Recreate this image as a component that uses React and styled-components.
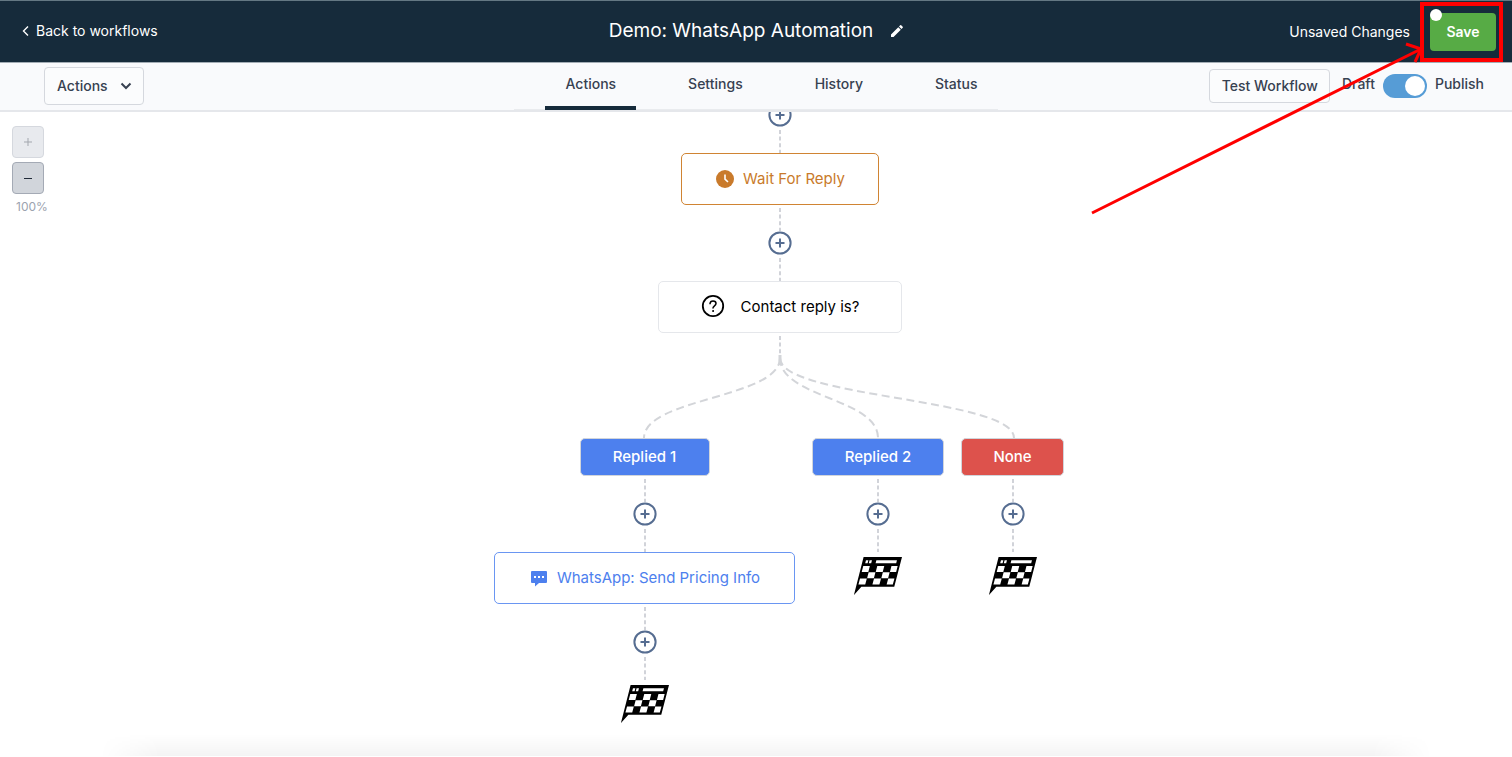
import React from "react";
import styled, { createGlobalStyle } from "styled-components";

const GlobalStyle = createGlobalStyle`
  *, *::before, *::after { box-sizing: border-box; }
  body {
    margin: 0;
    background: #fff;
    color: #374151;
    font-family: Inter, "Liberation Sans", sans-serif;
    font-size: 14px;
    line-height: 20px;
  }
  button, input { font: inherit; color: inherit; }
  button { cursor: pointer; padding: 0; }
  svg { display: block; flex: none; }
`;

const Page = styled.div`
  position: relative;
  display: flex;
  flex-direction: column;
  min-height: 100vh;
  overflow: hidden;
`;

const Header = styled.header`
  display: grid;
  grid-template-columns: 1fr auto 1fr;
  align-items: center;
  height: 63px;
  padding-bottom: 2px;
  background: #162b3b;
  border-top: 1px solid #647883;
  border-bottom: 1px solid #a3adb5;
  color: #fff;
`;

const BackLink = styled.a`
  display: flex;
  align-items: center;
  gap: 6px;
  justify-self: start;
  padding-left: 22px;
  color: #fff;
  text-decoration: none;
`;

const TitleGroup = styled.div`
  display: flex;
  align-items: center;
  gap: 18px;
`;

const Title = styled.h1`
  margin: 0;
  font-size: 19px;
  line-height: 28px;
  font-weight: 400;
`;

const IconButton = styled.button`
  border: 0;
  background: none;
`;

const HeaderRight = styled.div`
  display: flex;
  align-items: center;
  justify-content: flex-end;
  gap: 20px;
  padding: 2px 16px 0 0;
`;

const SaveSpot = styled.div`
  position: relative;
`;

const SaveButton = styled.button`
  display: block;
  width: 66px;
  height: 38px;
  border: 0;
  border-radius: 4px;
  background: #57ab45;
  color: #fff;
  font-weight: 600;
`;

const UnsavedDot = styled.span`
  position: absolute;
  top: -4px;
  left: 0;
  width: 12px;
  height: 12px;
  border-radius: 50%;
  background: #fff;
`;

const Highlight = styled.svg`
  position: absolute;
  z-index: 5;
  top: -13px;
  right: -16px;
  pointer-events: none;
`;

const Toolbar = styled.div`
  display: grid;
  grid-template-columns: 1fr auto 1fr;
  height: 49px;
  background: #f9fafc;
  border-bottom: 2px solid #e5e7eb;
`;

const ToolbarLeft = styled.div`
  display: flex;
  align-items: center;
  padding: 0 0 2px 44px;
`;

const ToolbarRight = styled.div`
  display: flex;
  align-items: center;
  justify-content: flex-end;
  gap: 12px;
  padding: 0 28px 2px 0;
`;

const OutlineButton = styled.button`
  display: flex;
  align-items: center;
  gap: 12px;
  height: ${(p) => (p.$tall ? 38 : 34)}px;
  padding: 0 11px 0 12px;
  border: 1px solid #d5d8de;
  border-radius: 4px;
  background: #fbfcfd;
  font-weight: 500;
`;

const Tabs = styled.nav`
  display: flex;
  gap: 32px;
  padding-left: 31px;
  border-bottom: 1px solid #e9ebee;
`;

const Tab = styled.a`
  padding: 11px 20px 0;
  margin-bottom: -1px;
  border-bottom: 4px solid ${(p) => (p.$active ? "#162b3b" : "transparent")};
  color: #374151;
  font-weight: 500;
  text-decoration: none;
`;

const PublishLabel = styled.label`
  display: flex;
  align-items: center;
  gap: 8px;
  font-weight: 500;
`;

const SwitchText = styled.span`
  padding-bottom: 4px;
`;

const Switch = styled.input`
  appearance: none;
  width: 44px;
  height: 24px;
  margin: 0;
  padding: 2px;
  border-radius: 12px;
  background: #569cd6;

  &::before {
    content: "";
    display: block;
    width: 20px;
    height: 20px;
    border-radius: 50%;
    background: #fff;
  }

  &:checked::before { margin-left: 20px; }
`;

const Canvas = styled.main`
  position: relative;
  flex: 1;
  display: flex;
  justify-content: center;
  overflow: hidden;
  padding: 0 0 32px 48px;
`;

const ZoomControls = styled.div`
  position: absolute;
  top: 14px;
  left: 12px;
  display: flex;
  flex-direction: column;
  gap: 4px;
`;

const ZoomButton = styled.button`
  display: grid;
  place-items: center;
  width: 32px;
  height: 32px;
  border: 1px solid ${(p) => (p.disabled ? "#d5d8de" : "#a4aab5")};
  border-radius: 4px;
  background: ${(p) => (p.disabled ? "#e8eaee" : "#d1d5db")};
  color: ${(p) => (p.disabled ? "#a3a7ae" : "#1f2937")};
`;

const ZoomLevel = styled.span`
  padding-left: 4px;
  color: #9ca3af;
  font-size: 12px;
  line-height: 18px;
`;

const Column = styled.div`
  display: flex;
  flex-direction: column;
  align-items: center;
`;

const Tree = styled(Column)`
  align-self: flex-start;
  margin-top: -9px;
`;

const Branches = styled.div`
  display: flex;
  align-items: flex-start;
  gap: 17px;
  padding-right: 2px;
`;

const AddButton = styled(IconButton)`
  border-radius: 50%;
`;

const tones = {
  wait: { line: "#d08433", text: "#c97a2b" },
  question: { line: "#e5e7eb", text: "#000" },
  message: { line: "#6a96f2", text: "#4d80ee" },
};

const StepCard = styled.button`
  display: flex;
  align-items: center;
  justify-content: center;
  gap: ${(p) => (p.$tone === "question" ? 16 : 8)}px;
  width: ${(p) => p.$width}px;
  height: 52px;
  border: 1px solid ${(p) => tones[p.$tone].line};
  border-radius: 5px;
  background: #fff;
  color: ${(p) => tones[p.$tone].text};
  font-size: 15px;
  line-height: 24px;
`;

const BranchPill = styled.button`
  width: ${(p) => p.$width}px;
  height: 38px;
  border: 1px solid #d1d5db;
  border-radius: 5px;
  background: ${(p) => (p.$none ? "#dd524c" : "#4d80ee")};
  color: #fff;
  font-size: 15px;
  line-height: 24px;
  font-weight: 500;
`;

const Finish = styled.div`
  padding-top: 5px;
`;

const BottomShade = styled.div`
  position: absolute;
  right: 80px;
  bottom: 1px;
  left: 100px;
  height: 22px;
  background: linear-gradient(to top, rgba(0, 0, 0, 0.045), transparent);
  mask-image: linear-gradient(to right, transparent, #000 60px, #000 calc(100% - 60px), transparent);
  pointer-events: none;
`;

const Link = () => (
  <svg width="2" height="26" aria-hidden="true">
    <path d="M1 3V26" stroke="#d1d3d9" strokeWidth="2" strokeDasharray="4 2.6" />
  </svg>
);

const Add = () => (
  <AddButton aria-label="Add step">
    <svg width="24" height="24" fill="none" stroke="#566d91" strokeWidth="2">
      <circle cx="12" cy="12" r="10.6" />
      <path d="M12 7.5v9M7.5 12h9" />
    </svg>
  </AddButton>
);

const AddLink = () => (
  <>
    <Link />
    <Add />
    <Link />
  </>
);

const BranchCurves = () => (
  <svg
    width="572"
    height="79"
    fill="none"
    stroke="#d3d5d9"
    strokeWidth="2"
    strokeDasharray="8 4.5"
    overflow="visible"
    aria-hidden="true"
  >
    <path d="M286 -4V6" strokeDasharray="none" strokeWidth="3" />
    <path d="M286 -1C286 39 150 39 150 79" />
    <path d="M286 -1C286 39 384 39 384 79" />
    <path d="M286 -1C286 39 520 39 520 79" />
  </svg>
);

const FinishFlag = () => (
  <Finish>
    <svg width="48" height="38" role="img" aria-label="End of workflow">
      <g transform="matrix(1 0 -0.26 1 9.6 0)">
        <path d="M0 0H38.4V29.8H5.5L0.2 38Z" fill="#000" />
        <path
          fill="#fff"
          d="M3.2 3.2h2.4v3h-2.4zM6.8 3.2h2.4v3h-2.4zM13.6 3.2h20.6v3H13.6zM2 9h6.6v5.9H2zM16 9h7v5.9h-7zM30.2 9h6.2v5.9h-6.2zM9 15.2h6.8v6H9zM23.2 15.2h6.8v6h-6.8zM2 21.4h6.8v6.2H2zM16 21.4h7v6.2h-7zM30.2 21.4h6.2v6.2h-6.2z"
        />
      </g>
    </svg>
  </Finish>
);

const ClockIcon = () => (
  <svg width="20" height="20" viewBox="0 0 20 20">
    <circle cx="10" cy="10" r="9" fill="#c97a2b" />
    <path d="M10 5.5V10.2L13 13" fill="none" stroke="#fff" strokeWidth="1.6" />
  </svg>
);

const QuestionIcon = () => (
  <svg width="24" height="28" viewBox="0 0 24 28" fill="none" stroke="#000" strokeWidth="1.8" strokeLinecap="round">
    <circle cx="12" cy="13" r="10.2" />
    <path d="M9 10.7c.2-1.800 1.400-2.700 3-2.700 1.800 0 3 1 3 2.500 0 2.300-3 2.300-3 4.600" strokeWidth="1.500" />
    <circle cx="12" cy="18" r=".5" fill="#000" strokeWidth="1" />
  </svg>
);

const MessageIcon = () => (
  <svg width="20" height="20" viewBox="0 0 20 20">
    <path d="M3 3H17Q18 3 18 4V14Q18 15 17 15H10L6 18.500V15H3Q2 15 2 14V4Q2 3 3 3Z" fill="#4d80ee" />
    <path d="M5 8h2v2H5zM9 8h2v2H9zM13 8h2v2h-2z" fill="#fff" />
  </svg>
);

export default function App() {
  return (
    <Page>
      <GlobalStyle />
      <Header>
        <BackLink href="#workflows">
          <svg width="8" height="12" fill="none" stroke="#fff" strokeWidth="1.400">
            <path d="M6 1.500L1.500 6L6 10.500" />
          </svg>
          Back to workflows
        </BackLink>
        <TitleGroup>
          <Title>Demo: WhatsApp Automation</Title>
          <IconButton aria-label="Rename workflow">
            <svg width="12" height="12" fill="#fff">
              <path d="M0 12V9.500L7.300 2.200L9.800 4.700L2.500 12ZM8 1.500L9.200 .3Q9.700 -.1 10.200 .3L11.700 1.800Q12.100 2.300 11.700 2.800L10.500 4Z" />
            </svg>
          </IconButton>
        </TitleGroup>
        <HeaderRight>
          <span>Unsaved Changes</span>
          <SaveSpot>
            <SaveButton>Save</SaveButton>
            <UnsavedDot />
            <Highlight width="424" height="220" fill="none" stroke="#f00" aria-hidden="true">
              <rect x="334" y="4" width="79" height="56" strokeWidth="4" />
              <path d="M4 213L333 49M318 44L333 49L327 62" strokeWidth="3" />
            </Highlight>
          </SaveSpot>
        </HeaderRight>
      </Header>
      <Toolbar>
        <ToolbarLeft>
          <OutlineButton $tall>
            Actions
            <svg width="12" height="8" fill="none" stroke="#374151" strokeWidth="2">
              <path d="M1.500 1.500L6 6L10.500 1.500" />
            </svg>
          </OutlineButton>
        </ToolbarLeft>
        <Tabs>
          <Tab href="#actions" $active>Actions</Tab>
          <Tab href="#settings">Settings</Tab>
          <Tab href="#history">History</Tab>
          <Tab href="#status">Status</Tab>
        </Tabs>
        <ToolbarRight>
          <OutlineButton>Test Workflow</OutlineButton>
          <PublishLabel>
            <SwitchText>Draft</SwitchText>
            <Switch type="checkbox" role="switch" defaultChecked />
            <SwitchText>Publish</SwitchText>
          </PublishLabel>
        </ToolbarRight>
      </Toolbar>
      <Canvas>
        <Tree>
          <Add />
          <Link />
          <StepCard $tone="wait" $width={198}>
            <ClockIcon />
            Wait For Reply
          </StepCard>
          <AddLink />
          <StepCard $tone="question" $width={244}>
            <QuestionIcon />
            Contact reply is?
          </StepCard>
          <Link />
          <BranchCurves />
          <Branches>
            <Column>
              <BranchPill $width={130}>Replied 1</BranchPill>
              <AddLink />
              <StepCard $tone="message" $width={301}>
                <MessageIcon />
                WhatsApp: Send Pricing Info
              </StepCard>
              <AddLink />
              <FinishFlag />
            </Column>
            <Column>
              <BranchPill $width={132}>Replied 2</BranchPill>
              <AddLink />
              <FinishFlag />
            </Column>
            <Column>
              <BranchPill $width={103} $none>None</BranchPill>
              <AddLink />
              <FinishFlag />
            </Column>
          </Branches>
        </Tree>
        <ZoomControls>
          <ZoomButton disabled aria-label="Zoom in">
            <svg width="8" height="8" stroke="currentColor"><path d="M4 0V8M0 4H8" /></svg>
          </ZoomButton>
          <ZoomButton aria-label="Zoom out">
            <svg width="8" height="8" stroke="currentColor"><path d="M0 4.500H8" /></svg>
          </ZoomButton>
          <ZoomLevel>100%</ZoomLevel>
        </ZoomControls>
      </Canvas>
      <BottomShade />
    </Page>
  );
}
